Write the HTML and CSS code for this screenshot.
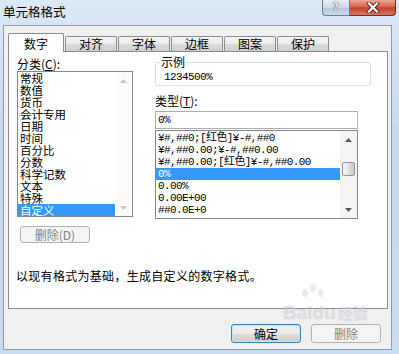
FILE: index.html
```html
<!DOCTYPE html>
<html lang="zh-CN">
<head>
    <meta charset="UTF-8">
    <title>单元格格式</title>
    <link rel="stylesheet" href="styles.css">
</head>
<body>

<!-- Вікно діалогу -->
<div class="window">
    <div class="titlebar">
        <div class="title">单元格格式</div>
        <div class="caption-buttons">
            <div class="btn-help">?</div>
            <div class="btn-close">
                <svg width="14" height="11" viewBox="0 0 14 11">
                    <path d="M3 1.5 L11 9.5 M11 1.5 L3 9.5" stroke="#5a1d16" stroke-width="4" stroke-linecap="square"/>
                    <path d="M3 1.5 L11 9.5 M11 1.5 L3 9.5" stroke="#fff" stroke-width="2.2" stroke-linecap="square"/>
                </svg>
            </div>
        </div>
    </div>

    <div class="client">
        <!-- Вкладки -->
        <div class="tabs">
            <div class="tab active">数字</div>
            <div class="tab">对齐</div>
            <div class="tab">字体</div>
            <div class="tab">边框</div>
            <div class="tab">图案</div>
            <div class="tab">保护</div>
        </div>

        <div class="panel">
            <div class="panel-top">
                <div class="col-left">
                    <div class="label">分类(<u>C</u>):</div>
                    <div class="listbox cat-list">
                        <div class="items">
                            <div class="item">常规</div>
                            <div class="item">数值</div>
                            <div class="item">货币</div>
                            <div class="item">会计专用</div>
                            <div class="item">日期</div>
                            <div class="item">时间</div>
                            <div class="item">百分比</div>
                            <div class="item">分数</div>
                            <div class="item">科学记数</div>
                            <div class="item">文本</div>
                            <div class="item">特殊</div>
                            <div class="item selected">自定义</div>
                        </div>
                        <div class="scrollbar off">
                            <div class="arrow"><svg width="7" height="4" viewBox="0 0 7 4"><path d="M0 4 L3.5 0 L7 4Z"/></svg></div>
                            <div class="track"></div>
                            <div class="arrow"><svg width="7" height="4" viewBox="0 0 7 4"><path d="M0 0 L3.5 4 L7 0Z"/></svg></div>
                        </div>
                    </div>
                    <button class="btn-small" disabled>删除(D)</button>
                </div>

                <div class="col-right">
                    <fieldset class="sample">
                        <legend>示例</legend>
                        <div class="sample-value mono">1234500%</div>
                    </fieldset>
                    <div class="label type-label">类型(<u>T</u>):</div>
                    <div class="input mono">0%</div>
                    <div class="listbox type-list">
                        <div class="items mono">
                            <div class="item">¥#,##0;[红色]¥-#,##0</div>
                            <div class="item">¥#,##0.00;¥-#,##0.00</div>
                            <div class="item">¥#,##0.00;[红色]¥-#,##0.00</div>
                            <div class="item selected">0%</div>
                            <div class="item">0.00%</div>
                            <div class="item">0.00E+00</div>
                            <div class="item">##0.0E+0</div>
                        </div>
                        <div class="scrollbar">
                            <div class="arrow"><svg width="7" height="4" viewBox="0 0 7 4"><path d="M0 4 L3.5 0 L7 4Z"/></svg></div>
                            <div class="track"><div class="thumb"></div></div>
                            <div class="arrow"><svg width="7" height="4" viewBox="0 0 7 4"><path d="M0 0 L3.5 4 L7 0Z"/></svg></div>
                        </div>
                    </div>
                </div>
            </div>
            <p class="desc">以现有格式为基础，生成自定义的数字格式。</p>
        </div>

        <div class="buttons">
            <button class="btn default">确定</button>
            <button class="btn" disabled>删除</button>
        </div>
    </div>

    <!-- Водяний знак -->
    <div class="watermark">
        <svg width="40" height="18" viewBox="0 0 40 18">
            <ellipse cx="22" cy="9" rx="3" ry="4"/>
            <ellipse cx="30" cy="4" rx="3" ry="4"/>
            <ellipse cx="38" cy="9" rx="3" ry="4"/>
        </svg>
        <div class="wm-text">Baidu<span>经验</span></div>
    </div>
</div>

</body>
</html>
```

FILE: styles.css
```css
/* Базові стилі сторінки */
body {
    margin: 0;
    font-family: "Noto Sans CJK SC", sans-serif;
    font-size: 12px;
    color: #000;
}

.mono {
    font-family: "Liberation Mono", "Noto Sans CJK SC", monospace;
    font-size: 11px;
    letter-spacing: -0.6px;
}

/* Рамка вікна */
.window {
    position: relative;
    width: 399px;
    height: 354px;
    box-sizing: border-box;
    padding: 0 7px 4px 3px;
    background: linear-gradient(to bottom, #dbe8f6, #c4d8ee 40%, #c9dcf0);
    display: flex;
    flex-direction: column;
    overflow: hidden;
}

.titlebar {
    height: 25px;
    display: flex;
    justify-content: space-between;
    align-items: flex-start;
}

.title {
    padding-top: 4px;
    line-height: 16px;
    font-size: 12.5px;
}

.caption-buttons {
    display: flex;
    margin-right: -4px;
}

.btn-help {
    width: 28px;
    height: 16px;
    box-sizing: border-box;
    border: 1px solid #6d7b8f;
    border-top: none;
    border-radius: 0 0 0 4px;
    background: linear-gradient(#e6eef7, #cbd8e8 50%, #b5c6da 51%, #cbdaec);
    color: #f4f7fb;
    font-family: "DejaVu Sans", sans-serif;
    font-weight: bold;
    font-size: 11px;
    line-height: 14px;
    text-align: center;
    text-shadow: 0 0 1px #333, 0 0 1px #333;
}

.btn-close {
    width: 46px;
    height: 16px;
    box-sizing: border-box;
    border: 1px solid #6e2c26;
    border-left: none;
    border-top: none;
    border-radius: 0 0 4px 0;
    background: linear-gradient(#e9a896, #d4674f 45%, #c2412d 52%, #d4775f);
    display: flex;
    justify-content: center;
    align-items: center;
}

/* Клієнтська область */
.client {
    flex: 1;
    background: #f0f0f0;
    border: 1px solid #8c9bb0;
    display: flex;
    flex-direction: column;
}

.tabs {
    display: flex;
    align-items: flex-end;
    gap: 1px;
    height: 18px;
    margin: 7px 0 0 4px;
    position: relative;
    z-index: 1;
}

.tab {
    width: 52px;
    height: 15px;
    box-sizing: border-box;
    border: 1px solid #898c95;
    border-bottom: none;
    border-radius: 2px 2px 0 0;
    background: linear-gradient(#f4f4f4, #ebebeb 50%, #dcdcdc 50%, #cfcfcf);
    line-height: 14px;
    text-align: center;
}

.tab.active {
    width: 56px;
    height: 19px;
    margin-bottom: -1px;
    padding-top: 3px;
    background: #fff;
}

.panel {
    margin-left: 4px;
    width: 380px;
    height: 258px;
    box-sizing: border-box;
    background: #fff;
    border: 1px solid #898c95;
}

.panel-top {
    display: flex;
    padding: 4px 0 0 8px;
}

.col-left {
    width: 116px;
    display: flex;
    flex-direction: column;
    align-items: flex-start;
}

.label {
    line-height: 15px;
    height: 15px;
}

/* Списки */
.listbox {
    display: flex;
    border: 1px solid #828790;
    box-sizing: border-box;
    background: #fff;
}

.cat-list {
    width: 116px;
    height: 146px;
}

.cat-list .item {
    font-size: 11.5px;
}

.items {
    flex: 1;
    min-width: 0;
}

.item {
    height: 12px;
    line-height: 12px;
    padding-left: 2px;
    white-space: nowrap;
}

.item.selected {
    background: #3399ff;
    color: #fff;
}

.scrollbar {
    width: 17px;
    display: flex;
    flex-direction: column;
    background: #f4f4f4;
}

.scrollbar .arrow {
    height: 17px;
    display: flex;
    justify-content: center;
    align-items: center;
    fill: #5b5b5b;
}

.scrollbar.off {
    background: #fbfbfb;
}

.scrollbar.off .arrow {
    fill: #c4c4c4;
}

.track {
    flex: 1;
    position: relative;
}

.thumb {
    position: absolute;
    top: 14px;
    left: 2px;
    width: 13px;
    height: 14px;
    box-sizing: border-box;
    border: 1px solid #979797;
    border-radius: 2px;
    background: linear-gradient(to right, #f3f3f3, #e6e6e6 50%, #d8d8d8 51%, #cfcfcf);
}

.btn-small {
    margin: 9px 0 0 3px;
    width: 70px;
    height: 17px;
    padding: 0;
    border: 1px solid #adb2b5;
    border-radius: 3px;
    background: #f4f4f4;
    color: #838383;
    font-family: inherit;
    font-size: 12px;
    line-height: 15px;
}

/* Права колонка */
.col-right {
    width: 216px;
    margin: -1px 0 0 22px;
}

.sample {
    margin: 0;
    padding: 0 0 2px 8px;
    border: 1px solid #d5dfe5;
    border-radius: 3px;
}

.sample legend {
    margin-left: -4px;
    padding: 0 1px;
    line-height: 14px;
}

.sample-value {
    margin-top: 2px;
    height: 12px;
    line-height: 12px;
}

.type-label {
    margin-top: 7px;
}

.input {
    margin-top: 3px;
    width: 203px;
    height: 18px;
    box-sizing: border-box;
    border: 1px solid #abadb3;
    padding-left: 2px;
    line-height: 16px;
}

.type-list {
    width: 203px;
    height: 89px;
    margin-top: 1px;
}

.type-list .items {
    padding-top: 1px;
}

.desc {
    margin: 26px 0 0 7px;
    line-height: 14px;
    letter-spacing: 0.3px;
}

/* Кнопки внизу */
.buttons {
    display: flex;
    justify-content: flex-end;
    gap: 10px;
    margin-top: 15px;
    padding-right: 10px;
}

.btn {
    width: 70px;
    height: 19px;
    padding: 0;
    box-sizing: border-box;
    border: 1px solid #adb2b5;
    border-radius: 3px;
    background: #f4f4f4;
    color: #838383;
    font-family: inherit;
    font-size: 12px;
    line-height: 16px;
}

.btn.default {
    border-color: #3c7fb1;
    box-shadow: inset 0 0 0 1px #c4e5f6;
    background: linear-gradient(#f2f2f2, #ebebeb 50%, #dddddd 50%, #cfcfcf);
    color: #000;
}

.watermark {
    position: absolute;
    left: 283px;
    top: 284px;
    fill: rgba(190, 196, 206, 0.35);
    pointer-events: none;
}

.wm-text {
    margin-top: -2px;
    font-family: "Liberation Sans", sans-serif;
    font-size: 19px;
    font-weight: bold;
    line-height: 20px;
    color: rgba(255, 255, 255, 0.3);
    text-shadow: 0 0 1px rgba(150, 160, 175, 0.45);
}

.wm-text span {
    font-family: "Noto Sans CJK SC", sans-serif;
    font-size: 15px;
    margin-left: 2px;
}
```
